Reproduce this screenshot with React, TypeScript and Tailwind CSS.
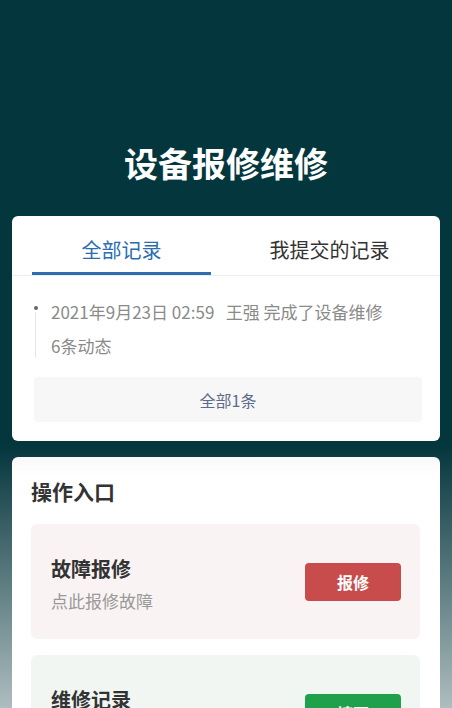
import React from "react";

export default function App() {
  const font = { fontFamily: '"Noto Sans CJK SC", "Noto Sans", sans-serif' };
  return (
    <div
      style={font}
      className="w-[452px] h-[708px] overflow-hidden bg-[linear-gradient(180deg,#04363d_0%,#04363d_63%,#aebdbf_100%)] px-[12px]"
    >
      <div className="pt-[141px] h-[216px]">
        <h1 className="text-center text-white font-bold text-[34px] leading-[44px]">设备报修维修</h1>
      </div>

      <div className="bg-white rounded-[6px] overflow-hidden">
        <div className="flex border-b border-[#ececec] pl-[20px]">
          <div className="w-[179px] flex flex-col items-center pt-[20px]">
            <span className="text-[20px] leading-[28px] text-[#2c6db0]">全部记录</span>
            <div className="mt-[8px] h-[3px] w-[179px] bg-[#2c6db0]" />
          </div>
          <div className="ml-[29px] w-[179px] flex flex-col items-center pt-[20px]">
            <span className="text-[20px] leading-[28px] text-[#333] whitespace-nowrap">我提交的记录</span>
            <div className="mt-[8px] h-[3px] w-[179px] bg-transparent" />
          </div>
        </div>

        <div className="pl-[22px] pr-[18px] pt-[19px] pb-[19px]">
          <div className="relative pl-[17px]">
            <div className="absolute left-[0px] top-[11px] w-[4px] h-[4px] rounded-full bg-[#666]" />
            <div className="absolute left-[1px] top-[17px] w-[1px] h-[46px] bg-[#e6e6e6]" />
            <div className="text-[17px] leading-[34px] text-[#8a8a8a] whitespace-nowrap">
              2021年9月23日 02:59&nbsp;&nbsp;&nbsp;王强 完成了设备维修
            </div>
            <div className="text-[17px] leading-[34px] text-[#8a8a8a]">6条动态</div>
          </div>
          <div className="mt-[14px] h-[45px] rounded-[4px] bg-[#f7f7f7] flex items-center justify-center text-[16px] text-[#5b6b8c]">
            全部1条
          </div>
        </div>
      </div>

      <div className="mt-[16px] bg-[linear-gradient(180deg,#f8f8f8_0px,#ffffff_20px)] rounded-[6px] px-[19px] pr-[20px] pt-[20px] pb-[20px]">
        <div className="text-[21px] leading-[28px] font-bold text-[#333]">操作入口</div>
        <div className="mt-[19px] h-[115px] rounded-[6px] bg-[#f9f4f3] flex items-center justify-between pl-[20px] pr-[19px]">
          <div className="flex flex-col pt-[7px]">
            <span className="text-[20px] leading-[32px] font-bold text-[#333]">故障报修</span>
            <span className="text-[17px] leading-[32px] text-[#999]">点此报修故障</span>
          </div>
          <div className="w-[96px] h-[38px] rounded-[4px] bg-[#c84c4c] flex items-center justify-center text-white font-bold text-[16px]">
            报修
          </div>
        </div>
        <div className="mt-[16px] h-[115px] rounded-[6px] bg-[#f1f6f3] flex items-center justify-between pl-[20px] pr-[19px]">
          <div className="flex flex-col pt-[7px]">
            <span className="text-[20px] leading-[32px] font-bold text-[#333]">维修记录</span>
            <span className="text-[17px] leading-[32px] text-[#999]">查看维修记录</span>
          </div>
          <div className="w-[96px] h-[38px] rounded-[4px] bg-[#1fa04a] flex items-center justify-center text-white font-bold text-[16px]">
            填写
          </div>
        </div>
      </div>
    </div>
  );
}
